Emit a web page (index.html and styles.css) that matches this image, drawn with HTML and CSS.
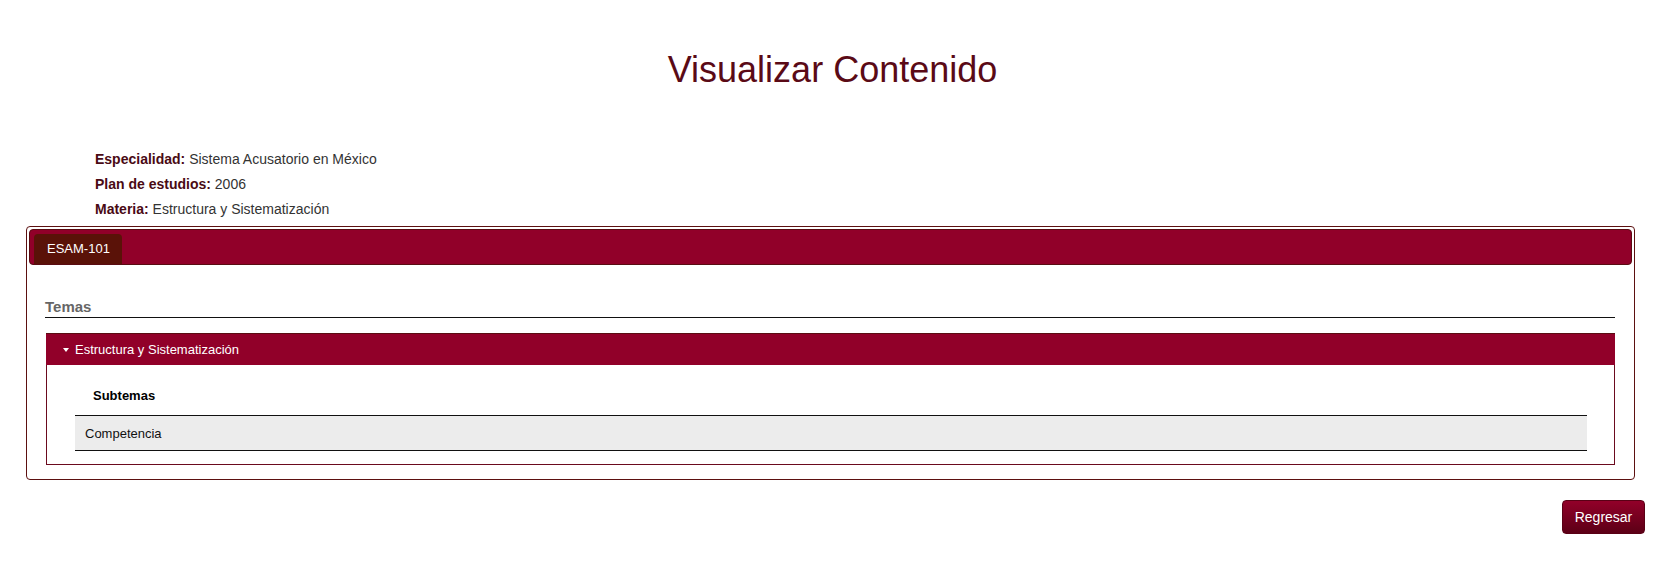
FILE: index.html
```html
<!DOCTYPE html>
<html lang="es">
<head>
<meta charset="utf-8">
<title>Visualizar Contenido</title>
<link rel="stylesheet" href="styles.css">
</head>
<body>
<h1 class="title">Visualizar Contenido</h1>
<div class="info">
  <div class="info-row"><span class="label">Especialidad:</span> Sistema Acusatorio en México</div>
  <div class="info-row"><span class="label">Plan de estudios:</span> 2006</div>
  <div class="info-row"><span class="label">Materia:</span> Estructura y Sistematización</div>
</div>
<div class="tabs">
  <div class="tab-bar">
    <div class="tab">ESAM-101</div>
  </div>
  <div class="tab-content">
    <div class="section-title">Temas</div>
    <div class="panel">
      <div class="panel-head"><span class="caret"></span>Estructura y Sistematización</div>
      <div class="panel-body">
        <table class="subtable">
          <thead><tr><th>Subtemas</th></tr></thead>
          <tbody><tr><td>Competencia</td></tr></tbody>
        </table>
      </div>
    </div>
  </div>
</div>
<div class="actions">
  <button class="btn" type="button">Regresar</button>
</div>
</body>
</html>
```
FILE: styles.css
```css
* { box-sizing: border-box; }
body {
  margin: 0;
  font-family: "Liberation Sans", Arial, sans-serif;
  background: #fff;
  color: #333;
}
.title {
  margin: 0;
  padding-top: 50px;
  font-size: 36px;
  line-height: 40px;
  font-weight: normal;
  text-align: center;
  color: #5a0a16;
}
.info {
  margin-top: 57px;
  padding-left: 95px;
  font-size: 14px;
}
.info-row {
  line-height: 25px;
  color: #333;
}
.label {
  font-weight: bold;
  color: #4a0a14;
}
.tabs {
  margin: 4px 30px 0 26px;
  border: 1px solid #5c1010;
  border-radius: 4px;
  padding: 2px;
}
.tab-bar {
  display: flex;
  height: 36px;
  padding: 4px 0 0 4px;
  background: #910029;
  border: 1px solid #5a0c12;
  border-radius: 4px;
}
.tab {
  width: 88px;
  height: 30px;
  padding: 0 0 0 13px;
  line-height: 30px;
  font-size: 13px;
  white-space: nowrap;
  color: #fff;
  background: #5a1208;
  border-radius: 4px 4px 0 0;
}
.tab-content {
  padding: 32px 17px 12px 16px;
}
.section-title {
  font-size: 15px;
  font-weight: bold;
  line-height: 20px;
  color: #666;
  border-bottom: 1px solid #111;
}
.panel {
  margin-top: 15px;
  margin-left: 1px;
  border: 1px solid #6b0a1e;
}
.panel-head {
  display: flex;
  align-items: center;
  height: 32px;
  margin: -1px -1px 0 -1px;
  padding-left: 17px;
  background: #910029;
  border-top: 1px solid #5a0c12;
  color: #fff;
  font-size: 13px;
}
.caret {
  width: 0;
  height: 0;
  margin-right: 6px;
  border-left: 3px solid transparent;
  border-right: 3px solid transparent;
  border-top: 4px solid #fff;
}
.panel-body {
  padding: 14px 27px 13px 28px;
}
.subtable {
  width: 100%;
  border-collapse: collapse;
}
.subtable th {
  text-align: left;
  font-size: 13px;
  font-weight: bold;
  line-height: 18px;
  padding: 8px 18px 10px;
  color: #000;
  border-bottom: 1px solid #111;
}
.subtable td {
  height: 35px;
  padding: 0 10px;
  font-size: 13px;
  color: #111;
  background: #ececec;
  border-bottom: 1px solid #111;
}
.actions {
  display: flex;
  justify-content: flex-end;
  margin-top: 20px;
  padding-right: 20px;
}
.btn {
  width: 83px;
  height: 34px;
  padding: 0;
  border: 1px solid #5a0015;
  border-radius: 4px;
  background: linear-gradient(#920029, #5c0016);
  color: #fff;
  font-family: "Liberation Sans", Arial, sans-serif;
  font-size: 14px;
}
```
